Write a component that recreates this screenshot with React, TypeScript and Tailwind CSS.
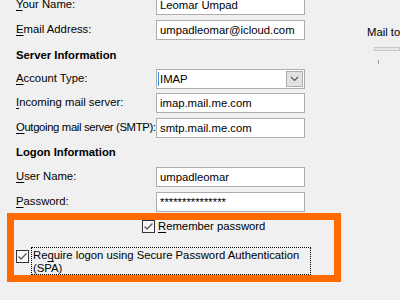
import React from "react";

const font = "font-['Segoe_UI','Liberation_Sans',Arial,sans-serif]";

const Key: React.FC<{ children: React.ReactNode }> = ({ children }) => (
  <span className="underline underline-offset-2 decoration-1">{children}</span>
);

const FieldRow: React.FC<{
  label: React.ReactNode;
  value: string;
  className?: string;
  labelClass?: string;
}> = ({ label, value, className = "", labelClass = "" }) => (
  <div className={`flex h-[20px] whitespace-nowrap ${className}`}>
    <div className={`w-[156px] pl-[16px] text-[11.3px] leading-[16px] pt-[1px] text-black ${labelClass}`}>{label}</div>
    <div className="w-[149px] h-[20px] border border-[#adadad] bg-white pl-[3px] text-[11.3px] leading-[18px] text-black">
      {value}
    </div>
  </div>
);

const Heading: React.FC<{ text: string; className?: string }> = ({ text, className = "" }) => (
  <div className={`h-[20px] pl-[16px] text-[11.3px] font-bold leading-[20px] text-black ${className}`}>{text}</div>
);

const CheckBox: React.FC = () => (
  <div className="w-[13px] h-[13px] border border-[#333333] bg-[#f7f7f7] flex items-center justify-center shrink-0">
    <svg width="11" height="11" viewBox="0 0 11 11">
      <path d="M1.5 5.5 L4 8 L9.5 2.5" fill="none" stroke="#5a5a5a" strokeWidth="1.3" />
    </svg>
  </div>
);

export default function App() {
  return (
    <div className={`w-[400px] h-[300px] overflow-hidden bg-[#f0f0f0] flex ${font}`}>
      <div className="w-[341px] shrink-0 flex flex-col">
        <FieldRow className="mt-[-5px]" label={<><Key>Y</Key>our Name:</>} value="Leomar Umpad" />
        <FieldRow className="mt-[5px]" label={<><Key>E</Key>mail Address:</>} value="umpadleomar@icloud.com" />
        <Heading className="mt-[5px]" text="Server Information" />
        <div className="flex h-[20px] mt-[4px] whitespace-nowrap">
          <div className="w-[156px] pl-[16px] text-[11.3px] leading-[16px] pt-[1px] text-black">
            <Key>A</Key>ccount Type:
          </div>
          <div className="relative w-[149px] h-[20px] border border-[#adadad] bg-white pl-[3px] text-[11.3px] leading-[18px] text-black flex">
            <span className="absolute left-[1px] top-[2px] w-[1px] h-[14px] bg-[#3c8ce6]" />
            <span className="flex-1">IMAP</span>
            <div className="w-[17px] h-[16px] mt-[1px] mr-[1px] border border-[#adadad] bg-[#e1e1e1] flex items-center justify-center">
              <svg width="9" height="6" viewBox="0 0 9 6">
                <path d="M1 1 L4.5 4.5 L8 1" fill="none" stroke="#555555" strokeWidth="1.1" />
              </svg>
            </div>
          </div>
        </div>
        <FieldRow className="mt-[4px]" label={<><Key>I</Key>ncoming mail server:</>} value="imap.mail.me.com" />
        <FieldRow
          className="mt-[5px]"
          labelClass="tracking-[-0.35px]"
          label={<><Key>O</Key>utgoing mail server (SMTP):</>}
          value="smtp.mail.me.com"
        />
        <Heading className="mt-[4px]" text="Logon Information" />
        <FieldRow className="mt-[5px]" label={<><Key>U</Key>ser Name:</>} value="umpadleomar" />
        <FieldRow className="mt-[5px]" label={<><Key>P</Key>assword:</>} value="***************" />
        <div className="mt-[1px] ml-[7px] w-[334px] h-[69px] border-[7px] border-[#ff6a00] text-[11.3px] text-black whitespace-nowrap">
          <div className="flex items-center gap-[3px] pl-[128px] h-[13px] leading-[13px]">
            <CheckBox />
            <span>
              <Key>R</Key>emember password
            </span>
          </div>
          <div className="flex items-start mt-[14px] pl-[2px]">
            <div className="mt-[3px]">
              <CheckBox />
            </div>
            <div className="ml-[2px] w-[280px] h-[28px] border border-dotted border-black pl-[1px] leading-[13px] pt-[1px]">
              Re<Key>q</Key>uire logon using Secure Password Authentication
              <br />
              (SPA)
            </div>
          </div>
        </div>
      </div>
      <div className="flex-1 flex flex-col">
        <div className="mt-[25px] ml-[26px] text-[11.3px] leading-[14px] text-black whitespace-nowrap">Mail to</div>
        <div className="mt-[8px] ml-[33px] h-[4px] border border-[#c6c6c6] bg-[#e7e7e7]" />
        <div className="mt-[9px] ml-[37px] w-[1px] h-[4px] bg-[#a0a0a0]" />
      </div>
    </div>
  );
}
